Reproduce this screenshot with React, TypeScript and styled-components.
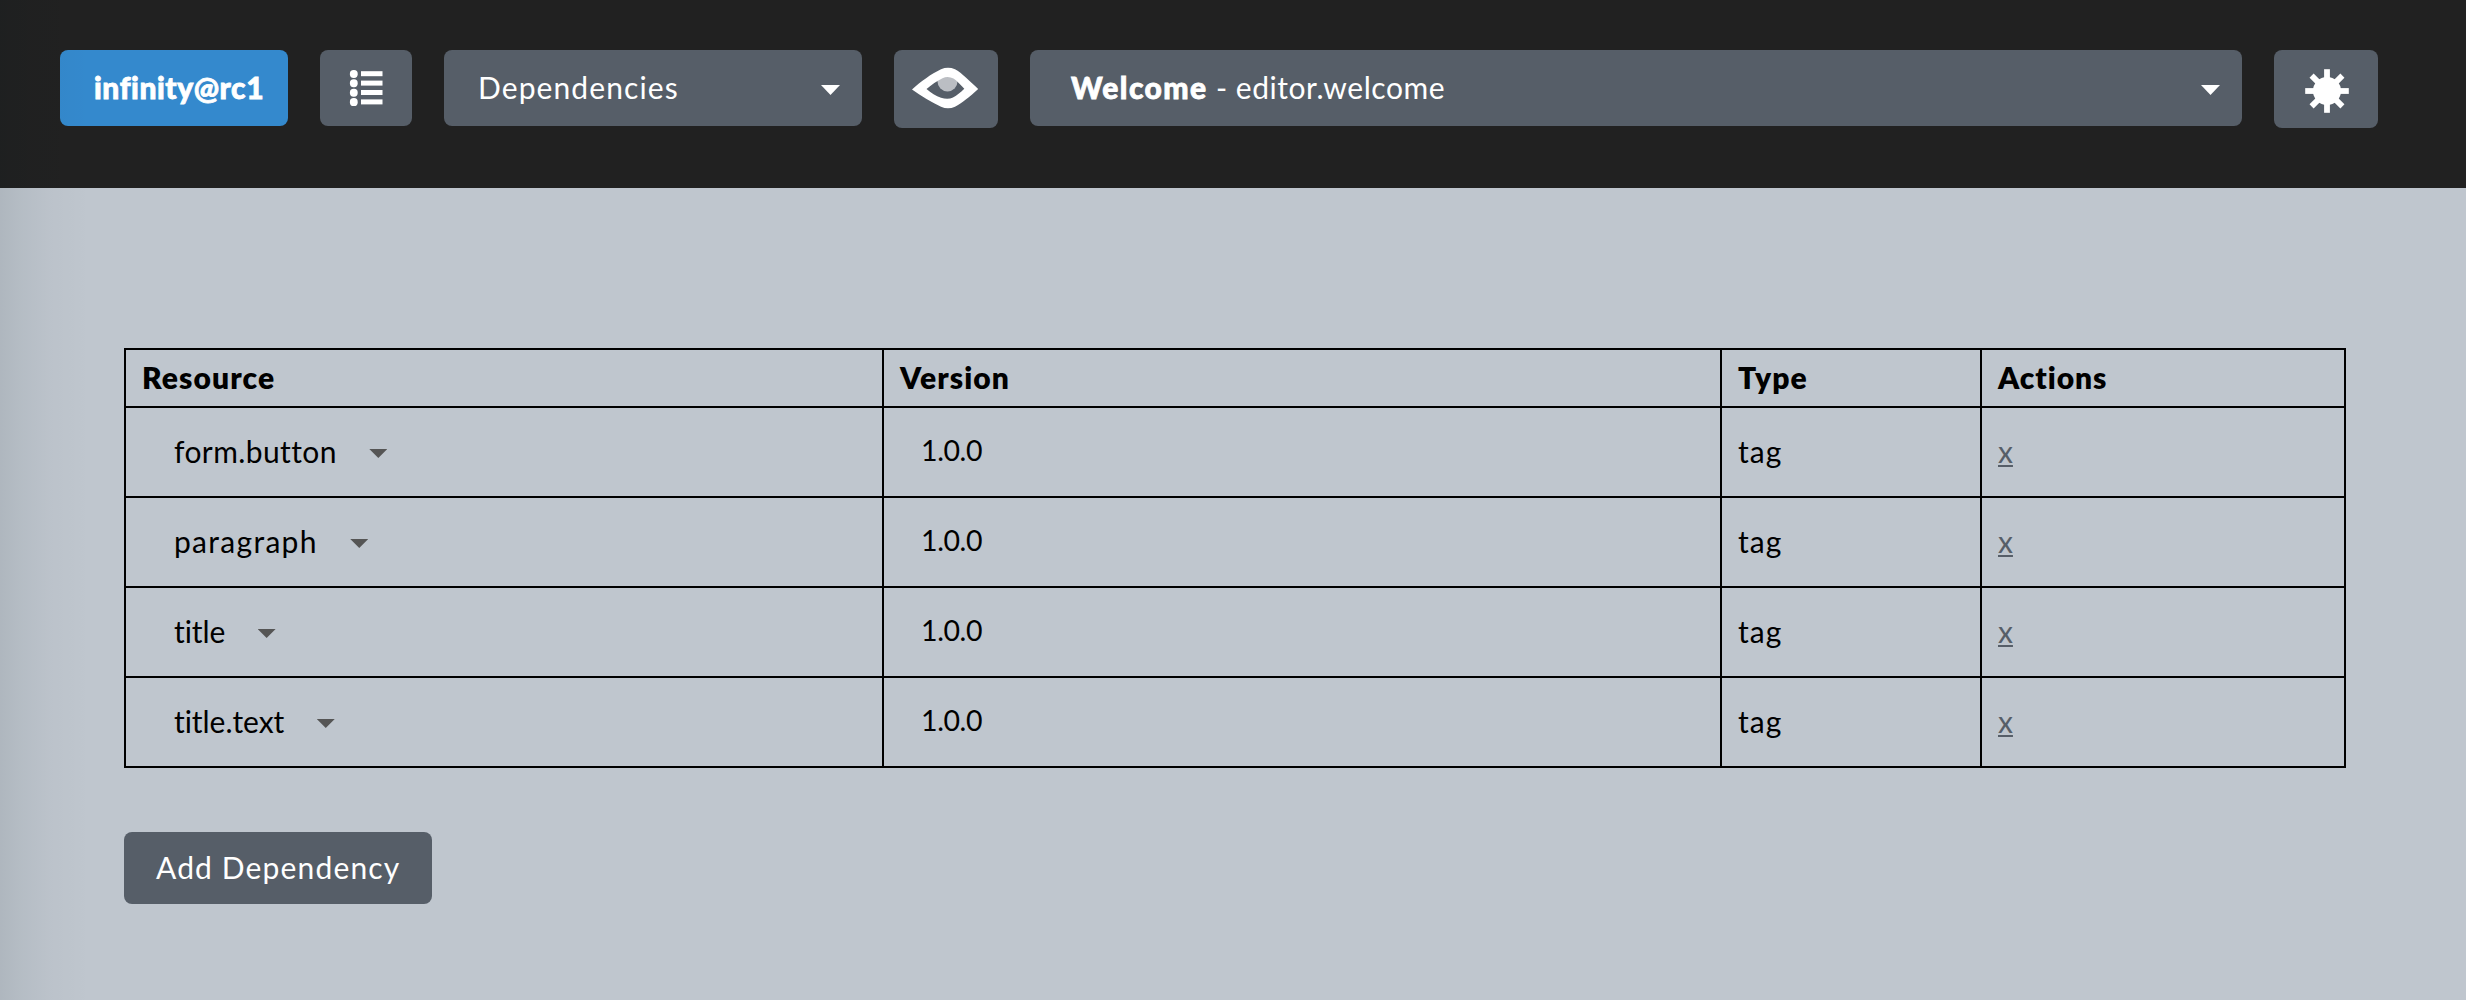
import React from "react";
import styled, { createGlobalStyle } from "styled-components";

const GlobalStyle = createGlobalStyle`
  * { box-sizing: border-box; }
  body {
    margin: 0;
    background: #bfc6ce;
    font-family: Lato, "Noto Sans", sans-serif;
    font-size: 30px;
    color: #000;
  }
`;

const Page = styled.div`
  position: relative;
  height: 1000px;
  overflow: hidden;
  background: #bfc6ce;
`;

const EdgeShade = styled.div`
  position: absolute;
  inset: 0 auto 0 0;
  width: 90px;
  pointer-events: none;
  background: linear-gradient(
    to right,
    rgba(0, 20, 24, 0.085) 0,
    rgba(0, 20, 24, 0.05) 22px,
    rgba(0, 20, 24, 0.018) 50px,
    rgba(0, 20, 24, 0) 90px
  );
`;

const Header = styled.header`
  display: flex;
  align-items: flex-start;
  gap: 32px;
  height: 188px;
  padding: 50px 88px 0 60px;
  background: #212121;
`;

const Control = styled.button<{ $width?: number; $height?: number; $pad?: number; $primary?: boolean }>`
  display: flex;
  align-items: center;
  justify-content: flex-start;
  flex: ${(p) => (p.$width ? "none" : "1")};
  width: ${(p) => (p.$width ? `${p.$width}px` : "auto")};
  height: ${(p) => p.$height ?? 76}px;
  padding: 0 22px 2px ${(p) => p.$pad ?? 22}px;
  border: 0;
  border-radius: 8px;
  background: ${(p) => (p.$primary ? "#3489cd" : "#565e68")};
  color: #fff;
  font: inherit;
  text-align: left;
`;

const IconControl = styled(Control)`
  justify-content: center;
  padding: 0;
`;

const Label = styled.span<{ $weight?: number; $track?: number }>`
  flex: none;
  line-height: 36px;
  white-space: pre;
  font-weight: ${(p) => p.$weight ?? 400};
  letter-spacing: ${(p) => p.$track ?? 0}px;
`;

const HeavyLabel = styled(Label)`
  font-weight: 900;
  -webkit-text-stroke: 0.8px currentColor;
`;

const VersionLabel = styled(Label)`
  font-size: 28.5px;
  font-weight: 400;
`;

const Caret = styled.span<{ $small?: boolean }>`
  flex: none;
  width: ${(p) => (p.$small ? 18 : 19)}px;
  height: ${(p) => (p.$small ? 9 : 10)}px;
  margin-top: ${(p) => (p.$small ? 5 : 6)}px;
  margin-left: ${(p) => (p.$small ? "32.5px" : "auto")};
  clip-path: polygon(0 0, 100% 0, 50% 100%);
  background: ${(p) => (p.$small ? "#555" : "#fff")};
`;

const Main = styled.main`
  padding: 160px 120px 0 124px;
`;

const Table = styled.table`
  width: 2222px;
  table-layout: fixed;
  border-collapse: separate;
  border-spacing: 0;
  border: solid #000;
  border-width: 2px 0 0 2px;
`;

const Col = styled.col<{ $width: number }>`
  width: ${(p) => p.$width}px;
`;

const HeadCell = styled.th`
  height: 58px;
  padding: 0 0 3px 16px;
  border: solid #000;
  border-width: 0 2px 2px 0;
  text-align: left;
  vertical-align: middle;
`;

const Cell = styled.td<{ $pad?: number; $lift?: number }>`
  height: 90px;
  padding: 0 0 ${(p) => p.$lift ?? 2}px ${(p) => p.$pad ?? 16}px;
  border: solid #000;
  border-width: 0 2px 2px 0;
  vertical-align: middle;
`;

const Resource = styled.div`
  display: flex;
  align-items: center;
`;

const Remove = styled.a`
  color: #565e68;
  line-height: 36px;
  text-decoration: underline;
  text-decoration-thickness: 2px;
  text-underline-offset: 2px;
`;

const AddButton = styled(Control)`
  margin-top: 64px;
`;

const ListIcon = () => (
  <svg width="34" height="38" viewBox="0 0 34 38" fill="#fff">
    {[0, 9.4, 18.8, 28.2].map((y) => (
      <g key={y}>
        <rect x="0.9" y={y + 0.9} width="7.8" height="8" rx="3.7" />
        <rect x="12" y={y + 2.2} width="21.5" height="5" />
      </g>
    ))}
  </svg>
);

const EyeIcon = () => (
  <svg width="104" height="78" viewBox="0 0 104 78">
    <circle cx="53.5" cy="31.5" r="10" fill="#bbbec3" />
    <path
      fill="#fff"
      fillRule="evenodd"
      d="M18 39.6 C27 31.5 37 24 47 19.3 Q54 16.4 61 19.3 C68 23 76 31.5 84.2 39 C76 46.5 68 53 61 56.8 Q54 59.8 47 56.8 C37 52 28 46.5 18 39.6 Z M32.5 39 C37 43 42 46 47 47.8 Q54 49.8 59 47.5 C63 45.3 67 42.3 70.3 38.8 C67 35.3 63 31 59.5 28.6 Q54 25.6 48.5 28.2 C43 30.8 37.5 34.8 32.5 39 Z"
    />
  </svg>
);

const GearIcon = () => (
  <svg width="44" height="44" viewBox="-22 -22 44 44" fill="#fff">
    <circle r="14" />
    {[0, 45, 90, 135].map((angle) => (
      <rect key={angle} x="-2.9" y="-21.8" width="5.8" height="43.6" transform={`rotate(${angle})`} />
    ))}
  </svg>
);

const IconNudge = styled.span<{ $x?: number; $y?: number }>`
  display: flex;
  margin-left: ${(p) => p.$x ?? 0}px;
  margin-top: ${(p) => p.$y ?? 0}px;
`;

const headings = [
  { text: "Resource", track: 1.1 },
  { text: "Version", track: 1.1 },
  { text: "Type", track: 1.1 },
  { text: "Actions", track: 0.9 },
];

const dependencies = [
  { name: "form.button", track: 0.4 },
  { name: "paragraph", track: 1.3 },
  { name: "title", track: -0.1 },
  { name: "title.text", track: -0.05 },
];

export default function App() {
  return (
    <Page>
      <GlobalStyle />
      <Header>
        <Control $width={228} $pad={34} $primary>
          <HeavyLabel $track={0.55}>infinity@rc1</HeavyLabel>
        </Control>
        <IconControl $width={92}>
          <ListIcon />
        </IconControl>
        <Control $width={418} $pad={34}>
          <Label $track={1.1}>Dependencies</Label>
          <Caret />
        </Control>
        <IconControl $width={104} $height={78}>
          <EyeIcon />
        </IconControl>
        <Control $pad={41}>
          <HeavyLabel $track={1.45}>Welcome</HeavyLabel>
          <Label $track={0.55}> - editor.welcome</Label>
          <Caret />
        </Control>
        <IconControl $width={104} $height={78}>
          <IconNudge $x={2} $y={4}><GearIcon /></IconNudge>
        </IconControl>
      </Header>
      <Main>
        <Table>
          <colgroup>
            <Col $width={758} />
            <Col $width={838} />
            <Col $width={260} />
            <Col $width={364} />
          </colgroup>
          <thead>
            <tr>
              {headings.map((h) => (
                <HeadCell key={h.text}>
                  <Label $weight={800} $track={h.track}>{h.text}</Label>
                </HeadCell>
              ))}
            </tr>
          </thead>
          <tbody>
            {dependencies.map((d) => (
              <tr key={d.name}>
                <Cell $pad={48}>
                  <Resource>
                    <Label $track={d.track}>{d.name}</Label>
                    <Caret $small />
                  </Resource>
                </Cell>
                <Cell $pad={37} $lift={6}>
                  <VersionLabel $track={-0.4}>1.0.0</VersionLabel>
                </Cell>
                <Cell><Label $track={1}>tag</Label></Cell>
                <Cell><Remove>x</Remove></Cell>
              </tr>
            ))}
          </tbody>
        </Table>
        <AddButton $width={308} $height={72} $pad={32}>
          <Label $track={1.15}>Add Dependency</Label>
        </AddButton>
      </Main>
      <EdgeShade />
    </Page>
  );
}
